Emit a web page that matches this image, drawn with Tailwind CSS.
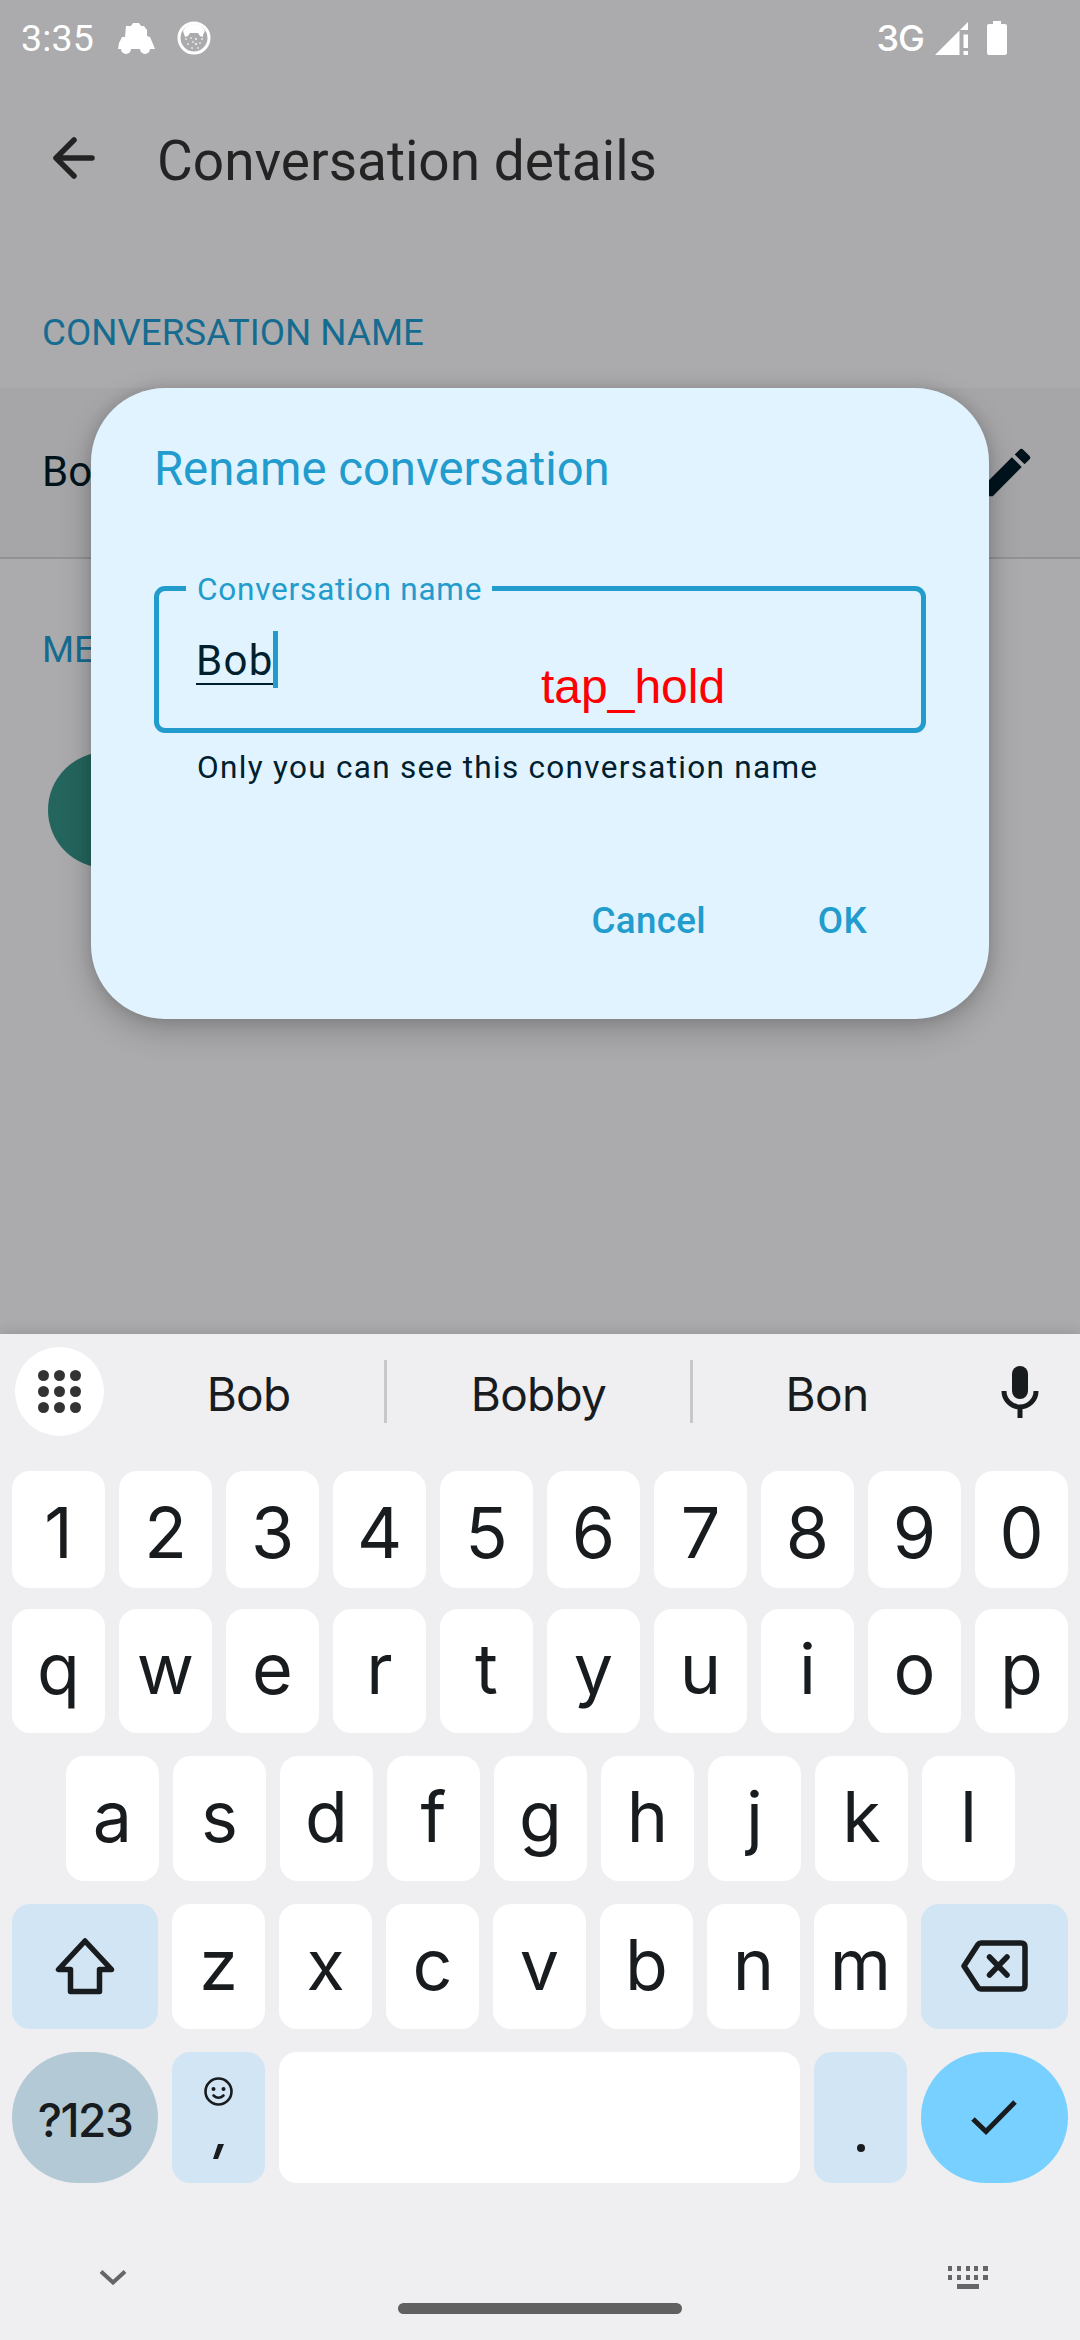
<!DOCTYPE html>
<html lang="en">
<head>
<meta charset="utf-8">
<title>Conversation details</title>
<script src="https://cdn.jsdelivr.net/npm/@tailwindcss/browser@4"></script>
</head>
<body class="relative flex h-[2340px] w-[1080px] flex-col overflow-hidden bg-[#ababad] font-['Roboto',sans-serif]">

<main class="h-[1334px] shrink-0">
  <!-- Status bar -->
  <header class="flex h-[76px] items-center justify-between pl-[21px] pr-[73px] text-white">
    <div class="flex items-center">
      <span class="mt-[2px] w-[96px] text-[37.5px] leading-none tracking-[0.2px]">3:35</span>
      <svg class="h-[32px] w-[38px]" viewBox="0 0 38 32" fill="#fff"><path d="M9 4h5l2-3h6l2 3h3l3 4v6l3 1 3 7 2 5h-5a5 5 0 0 1-10 0h-9a5 5 0 0 1-10 0H1l1-6 3-6h3z"/></svg>
      <svg class="ml-[22px] h-[34px] w-[34px]" viewBox="0 0 34 34"><circle cx="17" cy="17" r="15" fill="none" stroke="#fff" stroke-width="3"/><path d="M6 10Q10 3 17 3t11 7l-2 4 0 2-3-1-2-3h-8l-2 3-3 1-1-3z" fill="#fff"/><g fill="#e2e2e3"><circle cx="9" cy="18" r="1"/><circle cx="14" cy="17" r="1"/><circle cx="19" cy="18" r="1.200"/><circle cx="25" cy="18" r="1"/><circle cx="11" cy="23" r="1"/><circle cx="16" cy="21" r="1"/><circle cx="19" cy="23" r="1.300"/><circle cx="23" cy="22" r="1"/><circle cx="15" cy="27" r="1"/><circle cx="21" cy="27" r="1"/></g></svg>
    </div>
    <div class="flex items-center">
      <span class="font-['Inter',sans-serif] text-[36px] font-medium leading-none tracking-[-1px]">3G</span>
      <svg class="ml-[11px] h-[33px] w-[33px]" viewBox="0 0 33 33" fill="#fff"><path d="M0 33L24.500 8.500V33zM33 0v8h-8zM28.500 12.500H33V26h-4.500zM28.500 29H33v4h-4.500z"/></svg>
      <svg class="ml-[19px] h-[34px] w-[20px]" viewBox="0 0 20 34" fill="#fff"><path d="M6 0h8v3h4q2 0 2 2v27q0 2-2 2H2q-2 0-2-2V5q0-2 2-2h4z"/></svg>
    </div>
  </header>

  <div class="flex h-[164px] items-center pl-[53px]">
    <svg class="h-[42px] w-[42px]" viewBox="0 0 42 42" fill="none" stroke="#232323" stroke-width="5.500" stroke-linecap="round" stroke-linejoin="round"><path d="M39 21H3M21 3L3 21l18 18"/></svg>
    <h1 class="ml-[62px] mt-[6px] text-[55px] leading-none text-[#232323]">Conversation details</h1>
  </div>

  <section>
    <h2 class="h-[148px] pl-[42px] pt-[73px] text-[36.750px] leading-[40px] text-[#166b90]">CONVERSATION NAME</h2>
    <div class="flex h-[171px] items-center justify-between border-b-2 border-[#929294] bg-[#a6a6a8] px-[42px]">
      <span class="-mt-[2px] text-[42px] text-[#00131c]">Bo</span>
      <svg class="h-[63px] w-[63px]" viewBox="0 0 24 24" fill="#00131c"><path d="M3 17.250V21h3.750L17.810 9.940l-3.750-3.750L3 17.250zM20.710 7.040a.996.996 0 0 0 0-1.410l-2.340-2.340a.996.996 0 0 0-1.410 0l-1.830 1.830 3.750 3.750 1.830-1.830z"/></svg>
    </div>
  </section>

  <section>
    <h2 class="pl-[42px] pt-[71px] text-[36.750px] leading-[40px] text-[#166b90]">ME</h2>
    <div class="ml-[48px] mt-[82px] size-[116px] rounded-full bg-[#24655d]"></div>
  </section>
</main>

<!-- Rename dialog -->
<section class="absolute left-[91px] top-[388px] flex h-[631px] w-[898px] flex-col rounded-[74px] bg-[#e0f3ff] px-[63px] pt-[53px] text-[#229bcd] shadow-[0_11px_32px_rgba(0,0,0,0.22),0_0_14px_rgba(0,0,0,0.12)]">
  <h2 class="text-[47.250px] leading-[56px]">Rename conversation</h2>
  <div class="relative mt-[89px] h-[147px] w-[772px] rounded-[11px] border-[5px] border-[#229bcd] pl-[37px] pt-[40px]">
    <span class="absolute -top-[21px] left-[27px] w-[306px] bg-[#e0f3ff] pl-[11px] text-[31.500px] leading-[40px] tracking-[0.800px]">Conversation name</span>
    <div class="flex items-center">
      <span class="h-[51px] border-b-[2px] border-[#00202e] pt-[4px] text-[42px] leading-[45px] tracking-[1.300px] text-[#00202e]">Bob</span>
      <span class="-ml-[1px] h-[57px] w-[5px] bg-[#229bcd]"></span>
    </div>
    <span class="absolute left-[382px] top-[68px] font-['Liberation_Sans',sans-serif] text-[48px] leading-[56px] text-[#ff0000]">tap_hold</span>
  </div>
  <p class="ml-[43px] mt-[15px] text-[31.500px] leading-[40px] tracking-[1.300px] text-[#00202e]">Only you can see this conversation name</p>
  <div class="mr-[59px] mt-[111px] flex justify-end gap-[112px] text-[36.750px] font-medium leading-[44px] tracking-[0.300px]">
    <span>Cancel</span><span>OK</span>
  </div>
</section>

<!-- Keyboard -->
<section class="relative flex h-[1006px] flex-col bg-[#efeff1] font-['Inter',sans-serif] text-[#191c1e] shadow-[0_-2px_12px_rgba(0,0,0,0.12)]">
  <div class="flex h-[137px] items-center pb-[22px] pl-[15px] pr-[41px]">
    <div class="flex size-[89px] items-center justify-center rounded-full bg-white">
      <div class="grid grid-cols-3 gap-[5px]">
        <i class="size-[11px] rounded-full bg-[#333]"></i><i class="size-[11px] rounded-full bg-[#333]"></i><i class="size-[11px] rounded-full bg-[#333]"></i>
        <i class="size-[11px] rounded-full bg-[#333]"></i><i class="size-[11px] rounded-full bg-[#333]"></i><i class="size-[11px] rounded-full bg-[#333]"></i>
        <i class="size-[11px] rounded-full bg-[#333]"></i><i class="size-[11px] rounded-full bg-[#333]"></i><i class="size-[11px] rounded-full bg-[#333]"></i>
      </div>
    </div>
    <div class="ml-[9px] flex h-[63px] items-center text-[46px] leading-none tracking-[-0.700px]">
      <span class="w-[271px] pt-[4px] text-center">Bob</span>
      <i class="h-[63px] w-[3px] bg-[#c8c8ca]"></i>
      <span class="w-[303px] pt-[4px] text-center">Bobby</span>
      <i class="h-[63px] w-[3px] bg-[#c8c8ca]"></i>
      <span class="w-[268px] pt-[4px] text-center">Bon</span>
    </div>
    <svg class="ml-auto h-[52px] w-[38px]" viewBox="0 0 38 52"><rect x="11" y="0" width="16" height="33" rx="8" fill="#191c1e"/><path d="M3 25a16 16 0 0 0 32 0M19 41v11" fill="none" stroke="#191c1e" stroke-width="5"/></svg>
  </div>

  <div id="keys" class="flex flex-col px-[12px] text-[70px] leading-none"></div>

  <div class="relative flex-1">
    <svg class="absolute left-[99px] top-[87px] h-[15px] w-[28px]" viewBox="0 0 28 15" fill="none" stroke="#666" stroke-width="4"><path d="M2 1.500L14 12.500 26 1.500"/></svg>
    <svg class="absolute left-[947px] top-[83px] h-[24px] w-[42px]" viewBox="0 0 42 24" fill="#666"><path d="M1 0h4v5H1zM10 0h4v5h-4zM19 0h4v5h-4zM27 0h4v5h-4zM36 0h5v5h-5zM1 9h4v5H1zM10 9h4v5h-4zM19 9h4v5h-4zM27 9h4v5h-4zM36 9h5v5h-5zM10 18h22v5H10z"/></svg>
    <i class="absolute left-[398px] top-[120px] h-[11px] w-[284px] rounded-full bg-[#606060]"></i>
  </div>
</section>

<template id="shift"><svg class="mt-[2px] h-[58px] w-[60px]" viewBox="0 0 60 58" fill="none" stroke="#191c1e" stroke-width="5.500" stroke-linejoin="round"><path d="M30 4L3.500 32.500H15.500V54.500H44.500V32.500H56.500z"/></svg></template>
<template id="back"><svg class="mt-[3px] h-[52px] w-[67px]" viewBox="0 0 67 52" fill="none" stroke="#191c1e" stroke-width="5.500" stroke-linejoin="round" stroke-linecap="round"><path d="M20 3H60Q64 3 64 7V45Q64 49 60 49H20Q18 49 17 47.500L3 26 17 4.500Q18 3 20 3zM28.500 17L46 35M46 17L28.500 35"/></svg></template>
<template id="emoji"><span class="flex flex-col items-center"><svg class="size-[29px]" viewBox="0 0 29 29" fill="none" stroke="#191c1e" stroke-width="2.600"><circle cx="14.500" cy="14.500" r="13"/><circle cx="9.500" cy="12" r="2" fill="#191c1e" stroke="none"/><circle cx="19.500" cy="12" r="2" fill="#191c1e" stroke="none"/><path d="M9.500 18.500q5 4.500 10 0" stroke-linecap="round"/></svg><span class="mt-[38px] flex h-[15px] items-center"><svg class="h-[15px] w-[11px]" viewBox="0 0 11 15" fill="#191c1e"><path d="M5 0h6L5 15H0z"/></svg></span></span></template>
<template id="dot"><i class="mt-[61px] size-[8px] rounded-full bg-[#191c1e]"></i></template>
<template id="check"><svg class="h-[36px] w-[47px]" viewBox="0 0 47 36" fill="none" stroke="#191c1e" stroke-width="5"><path d="M2 19L15 31.500 44 2"/></svg></template>

<script>
const letter = c => ['w-[93px] rounded-[18px] bg-white', c];
const tpl = id => document.getElementById(id).innerHTML;
const rows = [
  ['h-[117px] mb-[21px] [&>div]:pt-[7px]', [...'1234567890'].map(letter)],
  ['h-[124px] mb-[23px] [&>div]:pb-1', [...'qwertyuiop'].map(letter)],
  ['h-[125px] mb-[23px] pl-[54px] [&>div]:pb-1', [...'asdfghjkl'].map(letter)],
  ['h-[125px] mb-[23px] [&>div]:pb-1', [['w-[146px] rounded-[18px] bg-[#d2e5f4]', tpl('shift')], ...[...'zxcvbnm'].map(letter), ['w-[147px] rounded-[18px] bg-[#d2e5f4]', tpl('back')]]],
  ['h-[131px]', [
    ['w-[146px] rounded-full bg-[#b4c9d6] text-[46px] font-medium tracking-[-1.500px] pt-[5px]', '?123'],
    ['w-[93px] rounded-[18px] bg-[#d2e5f4]', tpl('emoji')],
    ['w-[521px] rounded-[18px] bg-white', ''],
    ['w-[93px] rounded-[18px] bg-[#d2e5f4]', tpl('dot')],
    ['w-[147px] rounded-full bg-[#77d0ff]', tpl('check')]]],
];
document.getElementById('keys').innerHTML = rows.map(([cls, keys]) =>
  `<div class="flex gap-[14px] ${cls}">${keys.map(([k, c]) => `<div class="flex items-center justify-center ${k}">${c}</div>`).join('')}</div>`).join('');
</script>
</body>
</html>
